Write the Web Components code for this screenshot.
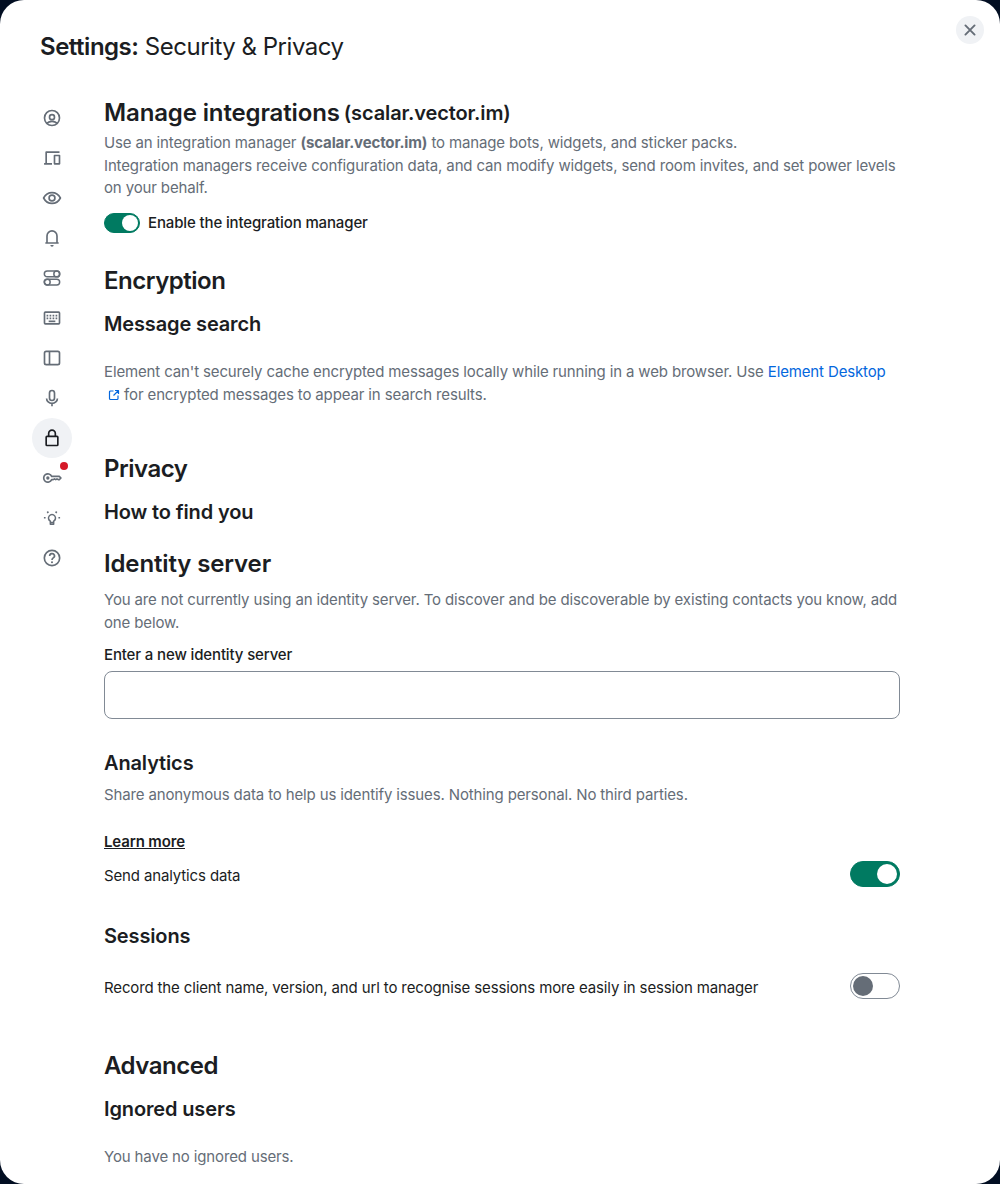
<!DOCTYPE html>
<html lang="en">
<head>
<meta charset="utf-8">
<title>Settings</title>
<style>
html{background:#020e22}
body{margin:0;font-family:Inter,"Liberation Sans",sans-serif;font-size:15px;line-height:22.5px;letter-spacing:-.135px;color:#1b1d22}
</style>
</head>
<body>
<settings-dialog></settings-dialog>
<script>
const GLYPHS = {
  profile: '<circle cx="12" cy="12" r="9"/><circle cx="12" cy="11" r="3"/><path d="M6 18.200c1.700-1.500 3.700-2.200 6-2.200s4.300.7 6 2.200"/>',
  devices: '<path d="M21 5H5v13M2.500 19H12"/><rect x="15" y="9" width="6" height="10"/>',
  eye: '<path d="M1.900 12C4 8 7.500 5.500 12 5.500S20 8 22.100 12C20 16 16.500 18.500 12 18.500S4 16 1.900 12z"/><circle cx="12" cy="12" r="3.500"/>',
  bell: '<path d="M4 18h16M6 18V9.500a6 6 0 0 1 12 0V18"/><path d="M10 20.500h4a2 2 0 0 1-4 0z" fill="currentColor" stroke="none"/>',
  toggles: '<g stroke-width="1.800"><rect x="2.800" y="3.600" width="18.400" height="7" rx="3.500"/><circle cx="17.700" cy="7.100" r="3.500"/><rect x="2.800" y="13.400" width="18.400" height="7" rx="3.500"/><circle cx="6.300" cy="16.900" r="3.500"/></g>',
  keyboard: '<rect x="3" y="5" width="18" height="14" rx="1"/><path d="M5.500 9.200h13M5.500 12.400h13" stroke-dasharray="2 1.600"/><path d="M8 16h8"/>',
  sidebar: '<rect x="3" y="4" width="18" height="16" rx="2"/><path d="M9 4v16"/>',
  mic: '<rect x="9" y="3" width="6" height="12" rx="3"/><path d="M5.500 12.500a6.500 6 0 0 0 13 0M12 18.500V22"/>',
  lock: '<rect x="5" y="10" width="14" height="11" rx="1"/><path d="M8 10V6.500a4 4 0 0 1 8 0V10"/>',
  key: '<path d="M11.600 10a5 5 0 1 0 0 4h1.900l1.500-1 1.500 1 1.500-1 1.500 1h1.200l2-2-2-2z"/><circle cx="7" cy="12" r="2" fill="currentColor" stroke="none"/>',
  bulb: '<path d="M10 15.800a4.200 4.200 0 1 1 4 0V19.500h-4z" stroke-width="1.800"/><path d="M6.400 4.300l1.100 1.600M17.600 4.300l-1.100 1.600M2.300 11.700h2M19.700 11.700h2M10 17.500h4"/>',
  help: '<circle cx="12" cy="12" r="9.200"/><path d="M9.200 9.500a2.900 2.700 0 1 1 4.300 2.300c-1 .7-1.500 1.200-1.500 2.500"/><circle cx="12" cy="17" r="1.250" fill="currentColor" stroke="none"/>',
  close: '<path d="M6.500 6.500l11 11M17.500 6.500l-11 11" stroke-width="2.300" stroke-linecap="round"/>',
  external: '<path d="M11 4H5a2 2 0 0 0-2 2v13a2 2 0 0 0 2 2h13a2 2 0 0 0 2-2v-6M14 3h7v7M21 3l-10 10" stroke-width="2.400"/>'
};
function define(name, render) {
  customElements.define(name, class extends HTMLElement {
    constructor() {
      super();
      this.attachShadow({mode: 'open'}).innerHTML = render(this);
    }
  });
}
define('ui-icon', el => `<style>:host{display:inline-block;width:20px;height:20px;flex:none}svg{display:block;width:100%;height:100%;fill:none;stroke:currentColor;stroke-width:2;stroke-linejoin:round}</style><svg viewBox="0 0 24 24">${GLYPHS[el.getAttribute('name')]}</svg>`);

define('nav-tab', el => `<style>
:host{display:grid;place-items:center;width:40px;height:40px;border-radius:50%;color:#656d77;position:relative}
:host([selected]){background:#f0f2f5;color:#1b1d22}
i{position:absolute;right:4px;top:4px;width:8px;height:8px;border-radius:50%;background:#d51928}
</style><ui-icon name="${el.getAttribute('icon')}"></ui-icon>${el.hasAttribute('alert') ? '<i></i>' : ''}`);

define('ui-switch', () => `<style>
:host{display:flex;box-sizing:border-box;width:50px;height:26px;padding:2px;border:1px solid #818a95;border-radius:13px;flex:none}
i{width:20px;height:20px;border-radius:50%;background:#656d77}
:host([on]){background:#007a61;border-color:#007a61;justify-content:flex-end}
:host([on]) i{background:#fff}
:host([small]){width:36px;height:20px;padding:1px}
:host([small]) i{width:16px;height:16px}
</style><i></i>`);

define('section-title', () => `<style>:host{display:flex;align-items:center;gap:4px;height:30px;font-size:24px;line-height:30px;font-weight:600}:host([tight]){letter-spacing:-.48px}::slotted(small){font-size:20px;line-height:30px}</style><slot></slot>`);
define('section-subtitle', () => `<style>:host{display:block;font-size:20px;line-height:24px;font-weight:600}</style><slot></slot>`);
define('section-text', () => `<style>:host{display:block;color:#656d77}</style><slot></slot>`);
define('setting-row', () => `<style>:host{display:flex;align-items:center;justify-content:space-between;height:26px}span{padding-top:5px}</style><span><slot></slot></span><slot name="control"></slot>`);
define('text-field', () => `<style>:host{display:block}label{display:block;font-weight:500}input{display:block;box-sizing:border-box;width:100%;height:48px;margin-top:5px;border:1px solid #818a95;border-radius:8px;padding:12px 16px;font:inherit;background:#fff;outline:0}</style><label for="f"><slot></slot></label><input id="f" type="text">`);

define('security-panel', () => `<style>
:host{display:block;width:796px}
.enable{display:flex;align-items:center;gap:8px;height:20px;font-weight:500}
a{color:#0467dd;text-decoration:none}
a ui-icon{width:12px;height:12px;margin-left:4px;vertical-align:-1px}
.more{display:block;color:#1b1d22;text-decoration:underline;font-weight:600}
</style>
<section-title>Manage integrations <small>(scalar.vector.im)</small></section-title>
<section-text style="margin-top:4px">Use an integration manager <b>(scalar.vector.im)</b> to manage bots, widgets, and sticker packs.<br>Integration managers receive configuration data, and can modify widgets, send room invites, and set power levels on your behalf.</section-text>
<div class="enable" style="margin-top:13.500px"><ui-switch small on></ui-switch><span>Enable the integration manager</span></div>
<section-title tight style="margin-top:33px">Encryption</section-title>
<section-subtitle style="margin-top:16px">Message search</section-subtitle>
<section-text style="margin-top:25px">Element can't securely cache encrypted messages locally while running in a web browser. Use <a href="#">Element Desktop <ui-icon name="external"></ui-icon></a> for encrypted messages to appear in search results.</section-text>
<section-title tight style="margin-top:48px">Privacy</section-title>
<section-subtitle style="margin-top:16px">How to find you</section-subtitle>
<section-title style="margin-top:25px">Identity server</section-title>
<section-text style="margin-top:10px">You are not currently using an identity server. To discover and be discoverable by existing contacts you know, add one below.</section-text>
<text-field style="margin-top:9.500px">Enter a new identity server</text-field>
<section-subtitle style="margin-top:32px">Analytics</section-subtitle>
<section-text style="margin-top:8.500px">Share anonymous data to help us identify issues. Nothing personal. No third parties.</section-text>
<a class="more" href="#" style="margin-top:24.500px">Learn more</a>
<setting-row style="margin-top:7.500px">Send analytics data<ui-switch slot="control" on></ui-switch></setting-row>
<section-subtitle style="margin-top:37px">Sessions</section-subtitle>
<setting-row style="margin-top:25px">Record the client name, version, and url to recognise sessions more easily in session manager<ui-switch slot="control"></ui-switch></setting-row>
<section-title tight style="margin-top:52px">Advanced</section-title>
<section-subtitle style="margin-top:16px">Ignored users</section-subtitle>
<section-text style="margin-top:25px">You have no ignored users.</section-text>`);

define('settings-dialog', () => `<style>
:host{display:flex;flex-direction:column;box-sizing:border-box;width:1000px;height:1184px;background:#fff;border-radius:24px;overflow:hidden}
header{display:flex;justify-content:space-between;flex:none;height:98px;box-sizing:border-box;padding:16px 16px 0 40px}
h1{margin:16px 0 0;font-size:24px;line-height:30px;font-weight:400;letter-spacing:-.48px}
h1 b{font-weight:600}
button{display:grid;place-items:center;width:28px;height:28px;padding:0;border:0;border-radius:50%;background:#f0f2f5;color:#656d77}
main{display:flex;gap:32px;padding-left:32px}
nav{display:flex;flex-direction:column}
</style>
<header><h1><b>Settings:</b> Security &amp; Privacy</h1><button aria-label="Close"><ui-icon name="close"></ui-icon></button></header>
<main><nav><nav-tab icon="profile"></nav-tab><nav-tab icon="devices"></nav-tab><nav-tab icon="eye"></nav-tab><nav-tab icon="bell"></nav-tab><nav-tab icon="toggles"></nav-tab><nav-tab icon="keyboard"></nav-tab><nav-tab icon="sidebar"></nav-tab><nav-tab icon="mic"></nav-tab><nav-tab icon="lock" selected></nav-tab><nav-tab icon="key" alert></nav-tab><nav-tab icon="bulb"></nav-tab><nav-tab icon="help"></nav-tab></nav>
<security-panel></security-panel></main>`);
</script>
</body>
</html>
